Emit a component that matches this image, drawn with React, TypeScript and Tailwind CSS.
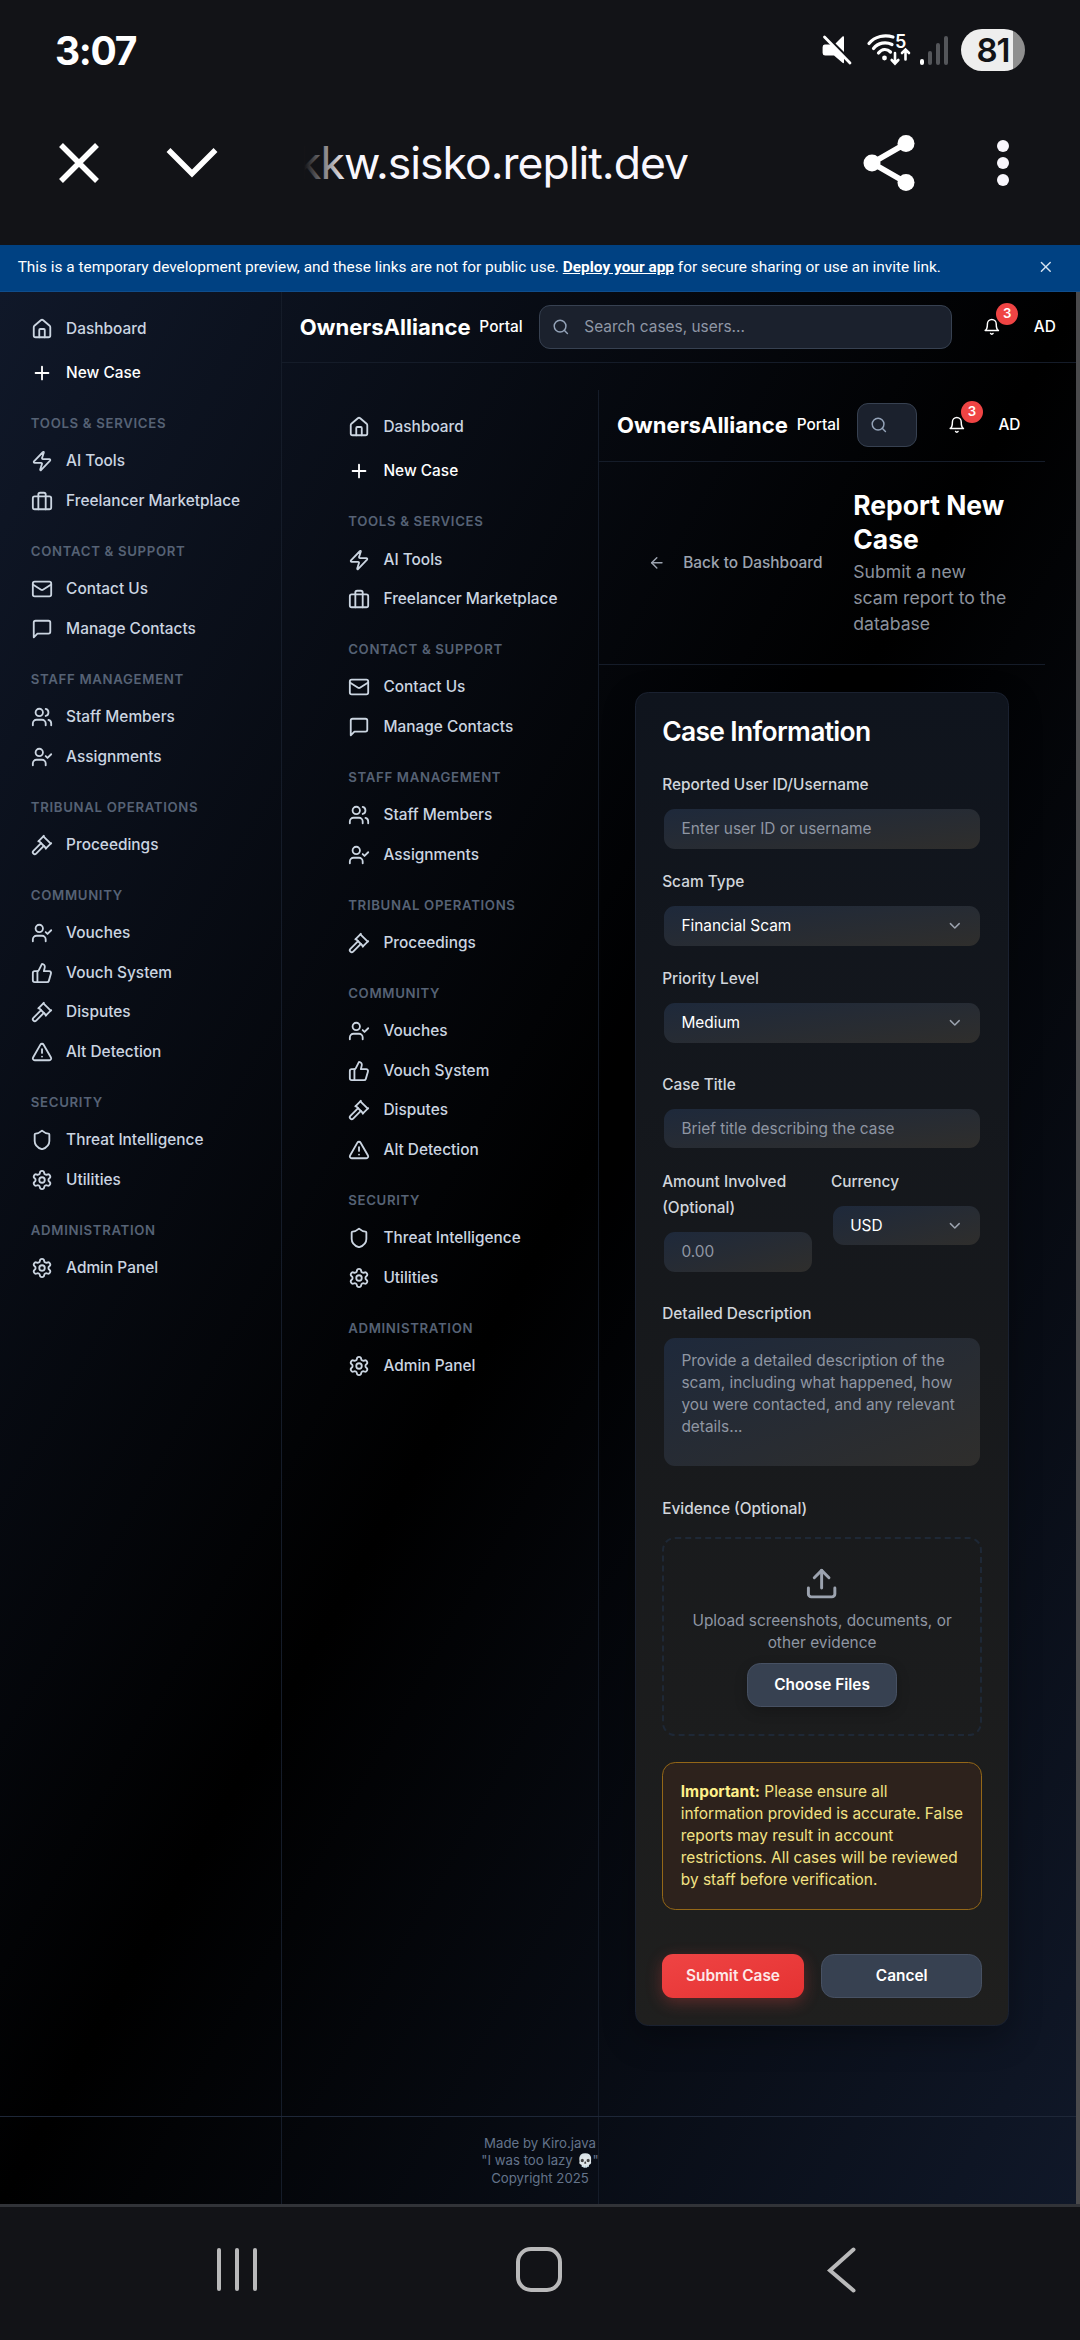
import React from "react";
import {
  ArrowLeft,
  ChevronDown,
  Gavel,
  House,
  Mail,
  Plus,
  Search,
  Settings,
  Shield,
  ThumbsUp,
  TriangleAlert,
  Upload,
  UserCheck,
  Users,
  X,
  Zap,
} from "lucide-react";

type IconType = React.ComponentType<{ className?: string }>;

const outline = {
  viewBox: "0 0 24 24",
  fill: "none",
  stroke: "currentColor",
  strokeWidth: 2,
  strokeLinecap: "round" as const,
  strokeLinejoin: "round" as const,
};

function Briefcase({ className }: { className?: string }) {
  return (
    <svg {...outline} className={className}>
      <rect x="2" y="7" width="20" height="14" rx="2" />
      <path d="M16 21V5a2 2 0 0 0-2-2h-4a2 2 0 0 0-2 2v16" />
    </svg>
  );
}

function Message({ className }: { className?: string }) {
  return (
    <svg {...outline} className={className}>
      <path d="M21 15a2 2 0 0 1-2 2H7l-4 4V5a2 2 0 0 1 2-2h14a2 2 0 0 1 2 2z" />
    </svg>
  );
}

function Bell({ className }: { className?: string }) {
  return (
    <svg {...outline} className={className}>
      <path d="M6 8a6 6 0 0 1 12 0c0 7 3 9 3 9H3s3-2 3-9" />
      <path d="M10.3 21a1.94 1.94 0 0 0 3.4 0" />
    </svg>
  );
}

type Item = { label: string; icon: IconType };

const sections: { title: string; items: Item[] }[] = [
  {
    title: "TOOLS & SERVICES",
    items: [
      { label: "AI Tools", icon: Zap },
      { label: "Freelancer Marketplace", icon: Briefcase },
    ],
  },
  {
    title: "CONTACT & SUPPORT",
    items: [
      { label: "Contact Us", icon: Mail },
      { label: "Manage Contacts", icon: Message },
    ],
  },
  {
    title: "STAFF MANAGEMENT",
    items: [
      { label: "Staff Members", icon: Users },
      { label: "Assignments", icon: UserCheck },
    ],
  },
  { title: "TRIBUNAL OPERATIONS", items: [{ label: "Proceedings", icon: Gavel }] },
  {
    title: "COMMUNITY",
    items: [
      { label: "Vouches", icon: UserCheck },
      { label: "Vouch System", icon: ThumbsUp },
      { label: "Disputes", icon: Gavel },
      { label: "Alt Detection", icon: TriangleAlert },
    ],
  },
  {
    title: "SECURITY",
    items: [
      { label: "Threat Intelligence", icon: Shield },
      { label: "Utilities", icon: Settings },
    ],
  },
  { title: "ADMINISTRATION", items: [{ label: "Admin Panel", icon: Settings }] },
];

function NavItem({ label, icon: Icon, active }: Item & { active?: boolean }) {
  return (
    <a
      className={`flex h-9 items-center gap-3 px-3 text-sm font-medium whitespace-nowrap ${
        active ? "text-white" : "text-[#cbd5e1]"
      }`}
    >
      <Icon className="h-5 w-5 shrink-0" />
      <span>{label}</span>
    </a>
  );
}

function Sidebar() {
  return (
    <nav className="w-64 shrink-0 border-r border-[#151c29] p-4">
      <div className="flex flex-col gap-1">
        <NavItem label="Dashboard" icon={House} />
        <NavItem label="New Case" icon={Plus} active />
      </div>
      {sections.map((s) => (
        <div key={s.title}>
          <h3 className="mt-5 mb-2 px-3 text-xs font-semibold tracking-wider whitespace-nowrap text-[#566275]">
            {s.title}
          </h3>
          {s.items.map((i) => (
            <NavItem key={i.label} {...i} />
          ))}
        </div>
      ))}
    </nav>
  );
}

function Header({ placeholder }: { placeholder?: string }) {
  return (
    <header className="flex h-[65px] items-center border-b border-[#151c29] pl-4 text-white">
      <span className="w-[155px] text-xl font-bold whitespace-nowrap">OwnersAlliance</span>
      <span className="ml-2 w-[38.4px] text-sm font-medium">Portal</span>
      <div className="ml-4 flex h-10 min-w-0 flex-1 items-center rounded-[10px] border border-[#374151] bg-[#1b212d] pl-[11px]">
        <Search className="h-4 w-4 shrink-0 text-[#94a3b8]" />
        {placeholder && <span className="ml-[13px] text-sm whitespace-nowrap text-[#8f97a5]">{placeholder}</span>}
      </div>
      <div className="relative ml-7 flex h-9 w-4 items-center justify-center">
        <Bell className="h-4 w-4 shrink-0" />
        <span className="absolute -top-[4px] left-[12px] flex h-5 w-5 items-center justify-center rounded-full bg-[#ef4444] text-xs font-semibold">
          3
        </span>
      </div>
      <span className="mr-[22px] ml-[30px] text-sm font-medium">AD</span>
    </header>
  );
}

function Field({ label, children }: { label: React.ReactNode; children: React.ReactNode }) {
  return (
    <div>
      <div className="mb-2 text-sm leading-6 font-medium text-[#d1d5db]">{label}</div>
      {children}
    </div>
  );
}

function TextBox({ placeholder }: { placeholder: string }) {
  return (
    <div className="mx-[1.5px] mt-[9.5px] mb-[2.5px] flex h-9 items-center rounded-[10px] bg-linear-to-br/srgb from-[#1e293b] to-[#2f2e2c] px-4 text-sm text-[#8f96a3]">
      {placeholder}
    </div>
  );
}

function SelectBox({ value }: { value: string }) {
  return (
    <div className="mx-[1.5px] mt-[9.5px] mb-[2.5px] flex h-9 items-center justify-between rounded-[10px] bg-linear-to-br/srgb from-[#1e293b] to-[#2f2e2c] pr-[15.5px] pl-4 text-sm text-white">
      {value}
      <ChevronDown className="h-4 w-4 text-[#9ca3af]" />
    </div>
  );
}

function CaseForm() {
  return (
    <div className="mt-6 ml-8 w-[340px] rounded-xl border border-[#1a2130] bg-linear-to-b/srgb from-[#0f141d] via-[#17191c] to-[#1f1f1e] p-6 shadow-[0_10px_30px_rgba(0,0,0,0.3)]">
      <h2 className="-mt-px mb-[25px] text-2xl leading-6 font-semibold tracking-tight text-white">Case Information</h2>
      <div className="flex flex-col gap-4">
        <Field label="Reported User ID/Username">
          <TextBox placeholder="Enter user ID or username" />
        </Field>
        <Field label="Scam Type">
          <SelectBox value="Financial Scam" />
        </Field>
        <Field label="Priority Level">
          <SelectBox value="Medium" />
        </Field>
      </div>
      <div className="mt-6 flex flex-col gap-4">
        <Field label="Case Title">
          <TextBox placeholder="Brief title describing the case" />
        </Field>
        <div className="grid grid-cols-2 gap-4">
          <Field label="Amount Involved (Optional)">
            <TextBox placeholder="0.00" />
          </Field>
          <Field label="Currency">
            <SelectBox value="USD" />
          </Field>
        </div>
      </div>
      <div className="mt-6">
        <Field label="Detailed Description">
          <div className="mx-[1.5px] mt-[9.5px] h-[116px] rounded-[10px] bg-linear-to-br/srgb from-[#1e293b] to-[#2f2e2c] px-4 pt-[11px] text-sm whitespace-nowrap text-[#8f96a3]">
            Provide a detailed description of the
            <br />
            scam, including what happened, how
            <br />
            you were contacted, and any relevant
            <br />
            details...
          </div>
        </Field>
      </div>
      <div className="mt-[27px] text-sm leading-6 font-medium text-[#d1d5db]">Evidence (Optional)</div>
      <div className="mt-[14px] flex h-[180px] flex-col items-center rounded-xl border-2 border-dashed border-[#1e2836] pt-6">
        <Upload className="h-8 w-8 shrink-0 text-[#9ca3af]" />
        <p className="mt-2 text-center text-sm whitespace-nowrap text-[#8f96a3]">
          Upload screenshots, documents, or
          <br />
          other evidence
        </p>
        <button className="mt-2 h-10 w-[136.5px] shrink-0 rounded-xl border border-[#475163] bg-[#374151] text-sm font-semibold text-white shadow-[0_4px_12px_rgba(0,0,0,0.2)]">
          Choose Files
        </button>
      </div>
      <div className="mt-6 h-[134px] rounded-xl border border-[#946717] bg-[#2d221c] px-[16px] py-4 text-sm whitespace-nowrap text-[#f3e283]">
        <b className="font-bold text-[#fef08a]">Important:</b> Please ensure all
        <br />
        information provided is accurate. False
        <br />
        reports may result in account
        <br />
        restrictions. All cases will be reviewed
        <br />
        by staff before verification.
      </div>
      <div className="mt-10 flex gap-4">
        <button className="h-10 w-[128.5px] rounded-[10px] bg-linear-to-br/srgb from-[#ef4444] to-[#e53232] text-sm font-semibold text-[#fde8e8] shadow-[0_4px_14px_rgba(239,68,68,0.3)]">
          Submit Case
        </button>
        <button className="h-10 flex-1 rounded-xl border border-[#475163] bg-[#374151] text-sm font-semibold text-white">
          Cancel
        </button>
      </div>
    </div>
  );
}

function StatusBar() {
  return (
    <div className="flex h-[100px] items-center pr-[55px] pl-[55px] text-white">
      <span className="text-[39px] leading-none font-bold tracking-[-1.3px]">3:07</span>
      <svg className="ml-auto h-[30px] w-[30px]" viewBox="0 0 30 30">
        <path fill="#fff" d="M13.5 8.5 20.500 1.600c.9-.8 1.500-.5 1.500.6V17z" />
        <path fill="#fff" d="M2.800 9.500h6.700L22 22v5.200c0 1.100-.6 1.400-1.500.6L12 20.500H3.200A2.600 2.600 0 0 1 .6 18v-5.800a2.600 2.600 0 0 1 2.200-2.700z" />
        <path d="M2.500 2 28 28" stroke="#fff" strokeWidth="2.800" strokeLinecap="round" />
      </svg>
      <svg className="ml-[15px] h-[32px] w-[45px] overflow-visible" viewBox="0 0 45 32">
        <g fill="none" stroke="#fff" strokeWidth="3.200" strokeLinecap="round">
          <path d="M2 9.500C8 2 18 .5 26 3" />
          <path d="M6.500 14.500C11 8.500 19 7.500 25 10.500" />
          <path d="M11.500 19C15 14.500 20 14.500 23.500 18" />
          <path d="M28 19v9.500M24.700 26l3.300 3.500 3.300-3.500" strokeWidth="2.600" />
          <path d="M38.500 25.500V16M35 19l3.500-3.500L42 19" strokeWidth="2.600" />
        </g>
        <circle cx="17.500" cy="24" r="2.400" fill="#fff" />
        <text x="28" y="14" fill="#fff" fontFamily="Inter" fontWeight="600" fontSize="18">5</text>
      </svg>
      <div className="ml-[8px] flex h-[29px] items-end gap-1">
        <span className="h-[6px] w-[4px] rounded-full bg-white" />
        <span className="h-[14px] w-[4px] rounded-full bg-[#54565a]" />
        <span className="h-[22px] w-[4px] rounded-full bg-[#54565a]" />
        <span className="h-[29px] w-[4px] rounded-full bg-[#54565a]" />
      </div>
      <div className="ml-[13px] flex h-[42px] w-[64px] items-center justify-center rounded-full bg-[linear-gradient(90deg,#eee_81%,#8f8f8f_81%)] text-[33px] leading-none font-semibold tracking-[-1px] text-[#121317]">
        81
      </div>
    </div>
  );
}

function AddressBar() {
  return (
    <div className="flex h-[145px] items-center pb-[19px]">
      <svg className="ml-[58px] h-[42px] w-[42px]" viewBox="0 0 42 42">
        <path d="M3 3 39 39M39 3 3 39" stroke="#fff" strokeWidth="5.500" />
      </svg>
      <svg className="ml-[66px] h-[32px] w-[52px]" viewBox="0 0 52 32">
        <path d="M2.500 3 26 26.500 49.500 3" fill="none" stroke="#fff" strokeWidth="5.500" />
      </svg>
      <div className="relative ml-[86px] w-[384px] overflow-hidden">
        <div className="flex justify-end text-[44.500px] leading-[60px] tracking-[-1px] whitespace-nowrap text-[#f9f7fd]">
          kkw.sisko.replit.dev
        </div>
        <div className="absolute inset-y-0 left-0 w-[42px] bg-linear-to-r/srgb from-[#121317] to-[#12131700]" />
      </div>
      <svg className="ml-[175px] h-[58px] w-[52px]" viewBox="0 0 52 58">
        <path d="M43 9.500 9 29l34 19.500" fill="none" stroke="#fff" strokeWidth="5.500" />
        <circle cx="43" cy="9.500" r="8.500" fill="#fff" />
        <circle cx="9" cy="29" r="8.500" fill="#fff" />
        <circle cx="43" cy="48.500" r="8.500" fill="#fff" />
      </svg>
      <div className="ml-[82px] flex flex-col gap-[5px]">
        <span className="h-3 w-3 rounded-full bg-[#f9f7fd]" />
        <span className="h-3 w-3 rounded-full bg-[#f9f7fd]" />
        <span className="h-3 w-3 rounded-full bg-[#f9f7fd]" />
      </div>
    </div>
  );
}

export default function App() {
  return (
    <div className="flex h-[2340px] w-[1080px] flex-col overflow-hidden bg-[#121317] font-['Inter',sans-serif]">
      <StatusBar />
      <AddressBar />
      <div className="relative [zoom:1.10204]">
        <div className="flex h-[42.500px] items-center border-b border-[#0f4d8c] bg-[#004182] px-4 pb-[2.500px] font-['Roboto',sans-serif] text-sm text-white">
          <p className="whitespace-nowrap">
            This is a temporary development preview, and these links are not for public use.{" "}
            <a className="font-bold underline">Deploy your app</a> for secure sharing or use an invite link.
          </p>
          <X className="mr-[7px] ml-auto h-4 w-4 text-[#d5e2f0]" />
        </div>
        <div className="relative flex h-[1735.500px] bg-linear-to-br/srgb from-[#101829] via-black to-[#101829]">
          <Sidebar />
          <div className="min-w-0 flex-1">
            <Header placeholder="Search cases, users..." />
            <div className="mt-6 mr-8 ml-8 flex h-[1646.500px]">
              <Sidebar />
              <main className="w-[404px]">
                <Header />
                <div className="flex h-[185px] items-center gap-4 border-b border-[#151c29] px-8">
                  <div className="flex w-[182.300px] shrink-0 items-center gap-4 px-3 text-sm font-medium whitespace-nowrap text-[#9ca3af]">
                    <ArrowLeft className="h-4 w-4 shrink-0" />
                    Back to Dashboard
                  </div>
                  <div className="whitespace-nowrap">
                    <h1 className="mb-[1.500px] text-2xl leading-[31.300px] font-bold text-white">
                      Report New
                      <br />
                      Case
                    </h1>
                    <p className="text-base text-[#8b919c]">
                      Submit a new
                      <br />
                      scam report to the
                      <br />
                      database
                    </p>
                  </div>
                </div>
                <CaseForm />
              </main>
            </div>
          </div>
          <footer className="absolute inset-x-0 bottom-0 h-20 border-t border-[#1e2738] pt-4 text-center text-xs text-[#64748b]">
            Made by Kiro.java
            <br />
            "I was too lazy 💀"
            <br />
            Copyright 2025
          </footer>
        </div>
        <div className="absolute right-0 bottom-0 h-[1735.500px] w-[3.600px] bg-[#4a4a4c]" />
      </div>
      <div className="h-[3px] shrink-0 bg-[#313338]" />
      <div className="flex flex-1 items-center pb-[8px]">
        <div className="ml-[217px] flex w-[40px] justify-between">
          <span className="h-[43px] w-[4px] rounded-full bg-[#b9b9ba]" />
          <span className="h-[43px] w-[4px] rounded-full bg-[#b9b9ba]" />
          <span className="h-[43px] w-[4px] rounded-full bg-[#b9b9ba]" />
        </div>
        <div className="ml-[259px] h-[45px] w-[46px] rounded-[15px] border-4 border-[#b9b9ba]" />
        <svg className="ml-[265px] h-[46px] w-[30px]" viewBox="0 0 30 46">
          <path d="M26.500 2.500 3 23.500 26.500 43.500" fill="none" stroke="#b9b9ba" strokeWidth="4" strokeLinecap="round" />
        </svg>
      </div>
    </div>
  );
}
